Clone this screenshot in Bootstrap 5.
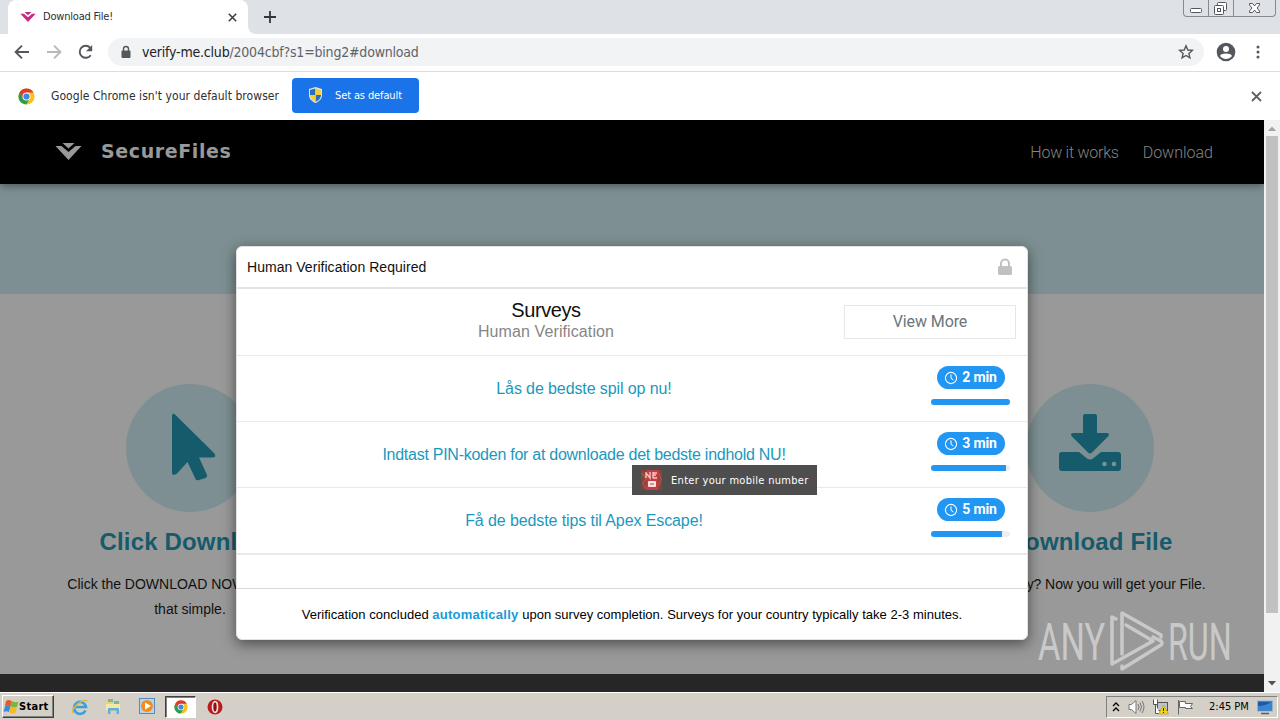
<!DOCTYPE html>
<html lang="en">
  <head>
    <meta charset="UTF-8" />
    <title>Download File!</title>
    <link
      href="https://cdn.jsdelivr.net/npm/bootstrap@5.3.2/dist/css/bootstrap.min.css"
      rel="stylesheet"
    />
    <style>
      body {
        width: 1280px;
        height: 720px;
        overflow: hidden;
        background: #fff;
        color: #111;
        font-family: "Liberation Sans", Arial, sans-serif;
        font-size: 14px;
      }
      svg {
        display: block;
        flex: none;
      }
      .ui-font {
        font-family: "DejaVu Sans Condensed", "DejaVu Sans", sans-serif;
        font-stretch: condensed;
      }

      /* browser chrome */
      .tab-strip {
        height: 34px;
        background: #dee1e6;
        padding-left: 8px;
      }
      .browser-tab {
        width: 240px;
        height: 34px;
        background: #fff;
        border-radius: 8px 8px 0 0;
        padding: 0 11px 0 12px;
        font-size: 11px;
        letter-spacing: -0.2px;
        color: #2c2f33;
      }
      .window-buttons {
        height: 17px;
        margin-right: 4px;
        border: 1px solid #868a91;
        border-top: 0;
        border-radius: 0 0 4px 4px;
      }
      .window-buttons > span {
        height: 16px;
        border-right: 1px solid #868a91;
      }
      .window-buttons > span:last-child {
        border-right: 0;
      }
      .toolbar {
        height: 38px;
        border-bottom: 1px solid #dcdddf;
        padding: 0 13px 1px;
      }
      .omnibox {
        height: 28px;
        border-radius: 14px;
        background: #f1f3f4;
        padding: 0 10px 0 11px;
        font-size: 14px;
        letter-spacing: -0.2px;
        color: #5f6368;
      }
      .infobar {
        height: 48px;
        padding: 0 18px;
        font-size: 12px;
        letter-spacing: 0.06px;
        color: #2c2f33;
      }
      .btn-default {
        --bs-btn-color: #fff;
        --bs-btn-bg: #1a73e8;
        width: 127px;
        height: 35px;
        margin-bottom: 1px;
        border-radius: 4px;
        font-size: 11px;
        letter-spacing: -0.12px;
        padding: 1px 0 0 15px;
      }

      /* dimmed site */
      .viewport {
        height: 572px;
      }
      .site {
        width: 1264px;
        background: #999;
        overflow: hidden;
      }
      .site-nav {
        height: 64px;
        background: #000;
        box-shadow: 0 2px 8px rgba(0, 0, 0, 0.4);
        padding: 0 51px 0 55px;
        z-index: 1;
      }
      .site-brand {
        font-family: "DejaVu Sans", sans-serif;
        font-weight: 700;
        font-size: 19px;
        letter-spacing: 0.6px;
        color: #999;
      }
      .site-nav .nav-link {
        padding: 2px 0 0;
        color: #858585;
        font-family: Roboto, sans-serif;
        font-weight: 300;
        font-size: 16px;
      }
      .site-nav .nav-link:first-child {
        letter-spacing: -0.25px;
      }
      .hero {
        height: 110px;
        background: #7d8f92;
      }
      .steps {
        height: 380px;
        width: 1350px;
        margin-left: -35px;
        padding-top: 90px;
      }
      .step-icon {
        width: 128px;
        height: 128px;
        background: #7d8f92;
      }
      .step-title {
        font-size: 24px;
        font-weight: 700;
        color: #155b6b;
        line-height: 28px;
        margin: 16px 0 16px;
        letter-spacing: 0.17px;
      }
      .step-text {
        font-size: 14px;
        line-height: 25px;
      }
      .site-footer {
        height: 18px;
        background: #262626;
      }
      .scroll-track {
        width: 16px;
        background: #f1f1f1;
      }
      .scroll-thumb {
        width: 12px;
        height: 477px;
        background: #c1c1c1;
      }

      /* verification dialog */
      .verify {
        left: 236px;
        top: 126px;
        width: 792px;
        height: 394px;
        border-radius: 6px;
        border: 1px solid #e2e2e2;
        background: #fff;
        box-shadow: 0 4px 14px rgba(0, 0, 0, 0.5);
        z-index: 2;
      }
      .verify-head {
        height: 42px;
        border-bottom: 2px solid #e4e4e4;
        padding: 0 14px 0 10px;
        letter-spacing: 0.04px;
      }
      .verify-row {
        height: 66px;
        border-bottom: 1px solid #e9e9e9;
      }
      .verify-top {
        height: 67px;
      }
      #offers .verify-row:last-child {
        height: 67px;
        border-bottom-width: 2px;
      }
      #offers .verify-row:nth-child(2) .offer-link {
        letter-spacing: -0.26px;
      }
      .verify-foot {
        height: 51px;
        padding-top: 2px;
        border-top: 1px solid #dadada;
        font-size: 13px;
        color: #000;
        letter-spacing: 0.02px;
      }
      .verify-foot strong {
        color: #179bd7;
        letter-spacing: 0.24px;
      }
      .survey-title {
        font-size: 20px;
        line-height: 22px;
        letter-spacing: -0.4px;
      }
      .survey-sub {
        font-size: 16px;
        line-height: 21px;
        letter-spacing: 0.1px;
        color: #868686;
      }
      .offer-link {
        color: #1b98bd;
        font-size: 16px;
        letter-spacing: -0.1px;
        text-decoration: none;
      }
      .offer-time {
        width: 79px;
        margin: 0 17px 6px 0;
      }
      .offer-badge {
        width: 68px;
        height: 23px;
        border-radius: 12px;
        background: #2196f3;
        color: #fff;
        font-family: Roboto, sans-serif;
        font-weight: 700;
        font-size: 14px;
        letter-spacing: -0.1px;
      }
      .offer-time .progress {
        height: 6px;
        border-radius: 3px;
        margin-top: 10px;
        background: #eee;
      }
      .offer-time .progress-bar {
        background: #2196f3;
      }
      .btn-more {
        width: 172px;
        height: 34px;
        border: 1px solid #e5e7e9;
        border-radius: 0;
        color: #6c757d;
        padding: 0;
        margin-right: 11px;
        font-family: Roboto, sans-serif;
        font-size: 16px;
        letter-spacing: -0.1px;
      }
      .drag-tip {
        left: 632px;
        top: 345px;
        width: 185px;
        height: 30px;
        background: #4e4e4e;
        color: #fff;
        font-size: 11px;
        letter-spacing: 0.3px;
        padding-left: 9px;
        z-index: 3;
      }
      .watermark {
        left: 1034px;
        top: 486px;
        overflow: visible;
        z-index: 3;
      }

      /* taskbar */
      .taskbar {
        height: 28px;
        background: #d4d0c8;
        border-top: 1px solid #fff;
      }
      .start-btn {
        width: 52px;
        height: 23px;
        margin-left: 2px;
        border: 1px solid;
        border-color: #fff #404040 #404040 #fff;
        box-shadow: inset -1px -1px #808080;
        font-size: 11px;
        font-weight: 700;
        letter-spacing: 0.3px;
        color: #000;
      }
      .task-active {
        width: 31px;
        height: 22px;
        background: #fff;
        border: 1px solid;
        border-color: #404040 #fff #fff #404040;
        box-shadow: inset 1px 1px #808080;
      }
      .tray {
        width: 172px;
        height: 22px;
        margin-right: 2px;
        border: 1px solid;
        border-color: #808080 #fff #fff #808080;
        font-size: 11px;
        color: #000;
      }
      .start-text,
      .clock-text,
      .tip-text {
        padding-top: 2px;
      }
    </style>
  </head>
  <body class="d-flex flex-column">
    <svg width="0" height="0" class="position-absolute">
      <defs>
        <symbol id="chrome-logo" viewBox="0 0 18 18">
          <circle cx="9" cy="9" r="8.5" fill="#fbc116" />
          <path d="M1.6 4.8A8.5 8.5 0 0 1 16.4 4.8H9L5.4 11Z" fill="#dd3b2d" />
          <path d="M1.6 4.8A8.5 8.5 0 0 0 8.7 17.5L12.6 11 5.4 11Z" fill="#2a9d4f" />
          <circle cx="9" cy="9" r="4.2" fill="#fff" />
          <circle cx="9" cy="9" r="3.3" fill="#4285e4" />
        </symbol>
        <symbol id="clock" viewBox="0 0 14 14">
          <circle cx="7" cy="7" r="5.6" fill="none" stroke="#fff" stroke-width="1.1" />
          <path d="M7 3.4V7.3L9.4 9" fill="none" stroke="#fff" stroke-width="1" />
        </symbol>
        <symbol id="vee" viewBox="0 0 26 17">
          <path d="M0 3H6L13 9 20 3H26L13 17Z" />
          <path d="M7 0H19L13 5.5Z" />
        </symbol>
      </defs>
    </svg>

    <!-- Tab strip -->
    <div class="tab-strip ui-font d-flex align-items-start">
      <div class="browser-tab d-flex align-items-center">
        <svg width="16" height="10" fill="#c82b83"><use href="#vee" /></svg>
        <span class="me-auto" style="margin-left: 7px">Download File!</span>
        <svg width="9" height="9" viewBox="0 0 9 9" stroke="#3c4043" stroke-width="1.6">
          <path d="M.8.8 8.2 8.2M8.2.8.8 8.2" />
        </svg>
      </div>
      <svg width="8" height="34" viewBox="0 0 8 34">
        <path d="M0 26A8 8 0 0 0 8 34H0Z" fill="#fff" />
      </svg>
      <svg width="12" height="34" viewBox="0 0 12 34" style="margin-left: 8px" stroke="#33363a" stroke-width="1.8">
        <path d="M0 17H12M6 11V23" />
      </svg>
      <div class="window-buttons d-flex ms-auto">
        <span style="width: 25px">
          <svg width="24" height="16" viewBox="0 0 24 16">
            <rect x="6.5" y="8.5" width="11" height="4" rx="1" fill="#fff" stroke="#53565e" />
          </svg>
        </span>
        <span style="width: 25px">
          <svg width="24" height="16" viewBox="0 0 24 16" fill="#fff" stroke="#53565e">
            <rect x="8.5" y="2.5" width="9" height="8" rx="1" />
            <rect x="5.5" y="5.5" width="9" height="9" rx="1" />
            <rect x="8.5" y="8.5" width="3" height="3" />
          </svg>
        </span>
        <span style="width: 41px">
          <svg width="41" height="16" viewBox="0 0 41 16">
            <path
              d="M15.5 3.5H18.5L20.5 6 22.5 3.5H25.5V5L23 8 25.5 11V12.5H22.5L20.5 10 18.5 12.5H15.5V11L18 8 15.5 5Z"
              fill="#fff"
              stroke="#53565e"
            />
          </svg>
        </span>
      </div>
    </div>

    <!-- Address bar -->
    <div class="toolbar ui-font d-flex align-items-center">
      <svg width="84" height="18" viewBox="0 0 84 18" fill="none" stroke-width="1.9">
        <path d="M16 9H3M9 2.6 2.6 9 9 15.4" stroke="#53575b" />
        <path d="M34 9H47M41 2.6 47.4 9 41 15.4" stroke="#b7b9bc" />
        <path d="M77.7 12.2A6 6 0 1 1 77.2 4.8" stroke="#53575b" />
        <path d="M79.2 2V8.2H73Z" fill="#53575b" />
      </svg>
      <div class="omnibox d-flex align-items-center flex-grow-1" style="margin-left: 11px">
        <svg width="14" height="14" viewBox="0 0 14 14">
          <rect x="2.5" y="5.5" width="9" height="7.5" rx="1" fill="#54585c" />
          <path d="M4.5 6V4A2.5 2.5 0 0 1 9.5 4V6" fill="none" stroke="#54585c" stroke-width="1.4" />
        </svg>
        <span class="me-auto" style="margin-left: 9px"><span style="color: #202124">verify-me.club</span>/2004cbf?s1=bing2#download</span>
        <svg width="16" height="16" viewBox="0 0 16 16" fill="none" stroke="#53575b" stroke-width="1.4">
          <path d="M8 1.8 9.8 6 14.3 6.4 10.9 9.4 11.9 13.8 8 11.5 4.1 13.8 5.1 9.4 1.7 6.4 6.2 6Z" />
        </svg>
      </div>
      <svg width="20" height="20" viewBox="0 0 20 20" style="margin-left: 12px">
        <circle cx="10" cy="10" r="9.3" fill="#54585c" />
        <circle cx="10" cy="7" r="3" fill="#fff" />
        <path d="M4 14C5.3 10.8 14.7 10.8 16 14 13 18 7 18 4 14Z" fill="#fff" />
      </svg>
      <svg width="4" height="14" viewBox="0 0 4 14" fill="#54585c" style="margin-left: 20px; margin-right: 7px">
        <circle cx="2" cy="2" r="1.5" />
        <circle cx="2" cy="7" r="1.5" />
        <circle cx="2" cy="12" r="1.5" />
      </svg>
    </div>

    <!-- Default browser prompt -->
    <div class="infobar ui-font d-flex align-items-center">
      <svg width="17" height="17"><use href="#chrome-logo" /></svg>
      <span style="margin-left: 16px; width: 241px">Google Chrome isn't your default browser</span>
      <button class="btn btn-default d-flex align-items-center">
        <svg width="15" height="16" viewBox="0 0 15 16" style="margin-bottom: 2px">
          <path d="M7.5 0 14 2V8C14 12 11 14.5 7.5 16 4 14.5 1 12 1 8V2Z" fill="#dce5ee" />
          <path d="M7.3 1.5 2 3V8H7.3ZM7.7 8H13C13 11.5 10.5 13.5 7.7 14.7Z" fill="#2a6db9" />
          <path d="M7.7 1.5 13 3V8H7.7ZM7.3 8H2C2 11.5 4.5 13.5 7.3 14.7Z" fill="#f6cf36" />
        </svg>
        <span style="margin-left: 12px">Set as default</span>
      </button>
      <svg width="11" height="11" viewBox="0 0 11 11" class="ms-auto" stroke="#5f6368" stroke-width="1.8">
        <path d="M1 1 10 10M10 1 1 10" />
      </svg>
    </div>

    <!-- Page -->
    <div class="viewport d-flex position-relative">
      <div class="site d-flex flex-column">
        <nav class="site-nav d-flex align-items-center justify-content-between">
          <div class="d-flex align-items-center">
            <svg width="27" height="17" fill="#999" style="margin-bottom: 2px"><use href="#vee" /></svg>
            <span class="site-brand" style="margin-left: 19px; margin-bottom: 1px">SecureFiles</span>
          </div>
          <div class="nav" style="gap: 24px">
            <a class="nav-link" href="#">How it works</a>
            <a class="nav-link" href="#">Download</a>
          </div>
        </nav>
        <div class="hero"></div>
        <div class="steps row g-0 text-center">
          <div class="col-4">
            <div class="step-icon rounded-circle mx-auto">
              <svg width="128" height="128" viewBox="0 0 128 128">
                <path
                  d="M46 32Q46 28.5 49 30.5L88 69Q91 73 87 73.5H73L81 91Q81.5 93 79.5 94L73 96Q70.5 97 69.5 95L61.5 78 51 89.5Q46 93 46 88Z"
                  fill="#155b6b"
                />
              </svg>
            </div>
            <h3 class="step-title">Click Download</h3>
            <div class="step-text">Click the DOWNLOAD NOW button, it's<br />that simple.</div>
          </div>
          <div class="col-4"></div>
          <div class="col-4">
            <div class="step-icon rounded-circle mx-auto">
              <svg width="128" height="128" viewBox="0 0 128 128">
                <path
                  d="M36 68H53L61 74.5Q64 76.5 67 74.5L75 68H92Q95 68 95 71V84Q95 87 92 87H36Q33 87 33 84V71Q33 68 36 68Z"
                  fill="#155b6b"
                />
                <path
                  d="M59 30H69Q71 30 71 32V49H81Q84.5 49.5 82 52.5L66 68.5Q64 70.5 62 68.5L46 52.5Q43.5 49.5 47 49H57V32Q57 30 59 30Z"
                  fill="#155b6b"
                  stroke="#7d8f92"
                  stroke-width="3"
                  paint-order="stroke"
                />
                <circle cx="78.5" cy="80" r="2.3" fill="#7d8f92" />
                <circle cx="88" cy="80" r="2.3" fill="#7d8f92" />
              </svg>
            </div>
            <h3 class="step-title">Download File</h3>
            <div class="step-text" style="letter-spacing: -0.08px">All Ready? Now you will get your File.</div>
          </div>
        </div>
        <div class="site-footer"></div>
      </div>

      <div class="scroll-track d-flex flex-column align-items-center">
        <svg width="16" height="16" viewBox="0 0 16 16"><path d="M4 11 8 6.5 12 11Z" fill="#a3a3a3" /></svg>
        <div class="scroll-thumb"></div>
        <svg width="16" height="16" viewBox="0 0 16 16" class="mt-auto"><path d="M4 5 8 9.5 12 5Z" fill="#505050" /></svg>
      </div>

      <!-- Verification dialog -->
      <div class="verify position-absolute d-flex flex-column">
        <div class="verify-head d-flex align-items-center justify-content-between">
          <span>Human Verification Required</span>
          <svg width="16" height="18" viewBox="0 0 16 18">
            <rect x="1" y="8" width="14" height="9" rx="1.5" fill="#c1c1c1" />
            <path d="M4 9V5.5A4 4 0 0 1 12 5.5V9" fill="none" stroke="#c1c1c1" stroke-width="2" />
          </svg>
        </div>
        <div class="verify-row verify-top d-flex align-items-center">
          <div class="flex-grow-1 text-center" style="padding: 0 0 3px 11px">
            <div class="survey-title">Surveys</div>
            <div class="survey-sub">Human Verification</div>
          </div>
          <button class="btn btn-more">View More</button>
        </div>
        <div id="offers"></div>
        <div class="verify-foot mt-auto d-flex align-items-center justify-content-center">
          <span>Verification concluded <strong>automatically</strong> upon survey completion. Surveys for your country typically take 2-3 minutes.</span>
        </div>
      </div>

      <div class="drag-tip ui-font position-absolute d-flex align-items-center">
        <svg width="21" height="20" viewBox="0 0 21 20">
          <rect width="21" height="20" fill="#884138" />
          <path d="M6 0H18L17 20H5Z" fill="#c63c40" />
          <path d="M1 3 5 9 2 13 5 19M18 3 20 9 18 16" stroke="#a75547" stroke-width="1.5" fill="none" />
          <path d="M5 2V8M5 3 9 8V2M12 2V8M12 3H16M12 5H15M12 8H16" stroke="#f1c6c6" stroke-width="1.4" fill="none" />
          <rect x="7" y="11" width="8" height="6" rx="1" fill="#f6e3e3" />
          <path d="M9 14H13" stroke="#c63c40" />
        </svg>
        <span class="tip-text" style="margin-left: 9px">Enter your mobile number</span>
      </div>

      <svg class="watermark position-absolute" width="210" height="70" viewBox="0 0 210 70">
        <g fill="#c9c9c9" font-family="Roboto, sans-serif" font-weight="400" font-size="52">
          <text transform="translate(4 54) scale(.66 1)">ANY</text>
          <text transform="translate(134 54) scale(.62 1)">RUN</text>
        </g>
        <g fill="none" stroke="#c9c9c9" stroke-width="3.5" stroke-linejoin="round" stroke-linecap="round">
          <path d="M82 13 78 11V58L119 35 92 19" />
          <path d="M88 48V7L127 29V31M88 60V63L127 39Q129 37 127 35L119 31" />
        </g>
      </svg>
    </div>

    <!-- Taskbar -->
    <div class="taskbar ui-font d-flex align-items-center">
      <div class="start-btn d-flex align-items-center">
        <svg width="16" height="16" viewBox="0 0 16 16">
          <path d="M3 2Q6 0 8.5 2L7.5 7.5Q4.5 6 2 7.5Z" fill="#e5592a" />
          <path d="M8.5 2Q12 4 15.5 2.5L14 8Q11 9 7.5 7.5Z" fill="#76b83f" />
          <path d="M2 7.5Q4.5 6 7.5 7.5L6 13Q3.5 11.5.5 13Z" fill="#3c88d6" />
          <path d="M7.5 7.5Q11 9.5 14 8L12.3 14Q10 15.5 6 13Z" fill="#f3b928" />
        </svg>
        <span class="start-text">Start</span>
      </div>
      <svg width="18" height="18" viewBox="0 0 18 18" style="margin-left: 17px">
        <path d="M14.5 12.5A6 6 0 1 1 15 9H4" fill="none" stroke="#3aa0df" stroke-width="2.6" />
        <path d="M2 15C-1 11 12 0 16.5 3" fill="none" stroke="#e4b63d" stroke-width="1.4" />
      </svg>
      <svg width="17" height="17" viewBox="0 0 17 17" style="margin-left: 16px">
        <path d="M1 3H6L7 5H14V14H1Z" fill="#ecd27a" />
        <path d="M3 1H8V4H3ZM9 3H14V6H9Z" fill="#7cb98b" />
        <path d="M1 6H15V12H1Z" fill="#f6e7a5" />
        <path d="M3 16V10H14V16H11.5V12.5H5.5V16Z" fill="#62aee0" />
      </svg>
      <svg width="17" height="17" viewBox="0 0 17 17" style="margin-left: 17px">
        <rect x=".5" y=".5" width="15" height="15" fill="#b7d5ee" stroke="#558abc" />
        <circle cx="8" cy="8" r="6" fill="#f28c20" />
        <path d="M6 4.5 12 8 6 11.5Z" fill="#fff" />
      </svg>
      <div class="task-active d-flex align-items-center justify-content-center" style="margin-left: 9px">
        <svg width="14" height="14"><use href="#chrome-logo" /></svg>
      </div>
      <svg width="16" height="16" viewBox="0 0 16 16" style="margin-left: 11px">
        <circle cx="8" cy="8" r="7.5" fill="#b91c1c" />
        <ellipse cx="8" cy="8" rx="2.5" ry="5.3" fill="#8b1010" stroke="#f3dede" stroke-width="1.7" />
      </svg>
      <div class="tray d-flex align-items-center ms-auto">
        <svg width="8" height="10" viewBox="0 0 8 10" style="margin-left: 5px" fill="none" stroke="#000" stroke-width="1.3">
          <path d="M1 4 4 1 7 4M1 9 4 6 7 9" />
        </svg>
        <svg width="17" height="16" viewBox="0 0 17 16" style="margin-left: 8px" fill="#fff" stroke="#777">
          <path d="M1 5.5H3.5L8 1.5V14.5L3.5 10.5H1Z" />
          <path d="M10 5Q12 8 10 11M12 3.5Q15 8 12 12.5M14 2Q18 8 14 14" fill="none" />
        </svg>
        <svg width="17" height="16" viewBox="0 0 17 16" style="margin-left: 7px">
          <rect x="5.5" y="3.5" width="10" height="8" fill="#b9c4cd" stroke="#555" />
          <path d="M1.5.5V5.5H5.5V.5M3.5 5.5V14.5H8" fill="#fff" stroke="#555" />
          <path d="M11.5 6 16.5 15H6.5Z" fill="#f5d51c" stroke="#b59800" stroke-width=".6" />
          <path d="M11.5 9V12M11.5 13V14" stroke="#222" />
        </svg>
        <svg width="17" height="16" viewBox="0 0 17 16" style="margin-left: 8px" fill="#fff" stroke="#666">
          <path d="M1.5 1V15.5" />
          <path d="M2.5 2.5H8.5V4.5H15.5L13.5 7.5 15.5 9.5H8.5V8.5H2.5Z" />
        </svg>
        <span class="clock-text" style="margin-left: 15px">2:45 PM</span>
        <svg width="16" height="16" viewBox="0 0 16 16" class="ms-auto me-1">
          <rect x=".5" y="2" width="15" height="10" fill="#1d59a5" stroke="#8eb0d5" />
          <path d="M1 11.5V7Q8 7 15 2.5V11.5Z" fill="#3c84cf" />
          <path d="M4 14.5H12" stroke="#46607c" stroke-width="1.5" />
        </svg>
      </div>
    </div>

    <script src="https://cdn.jsdelivr.net/npm/bootstrap@5.3.2/dist/js/bootstrap.bundle.min.js"></script>
    <script>
      const offers = [
        { title: 'Lås de bedste spil op nu!', minutes: 2, progress: 100 },
        {
          title: 'Indtast PIN-koden for at downloade det bedste indhold NU!',
          minutes: 3,
          progress: 95,
        },
        { title: 'Få de bedste tips til Apex Escape!', minutes: 5, progress: 90 },
      ];

      document.getElementById('offers').innerHTML = offers
        .map(
          (o) => `<div class="verify-row d-flex align-items-center">
              <div class="flex-grow-1 text-center"><a class="offer-link" href="#">${o.title}</a></div>
              <div class="offer-time">
                <div class="offer-badge d-flex align-items-center justify-content-center mx-auto">
                  <svg width="14" height="14" class="me-1"><use href="#clock" /></svg>${o.minutes} min
                </div>
                <div class="progress"><div class="progress-bar" style="width: ${o.progress}%"></div></div>
              </div>
            </div>`
        )
        .join('');
    </script>
  </body>
</html>
